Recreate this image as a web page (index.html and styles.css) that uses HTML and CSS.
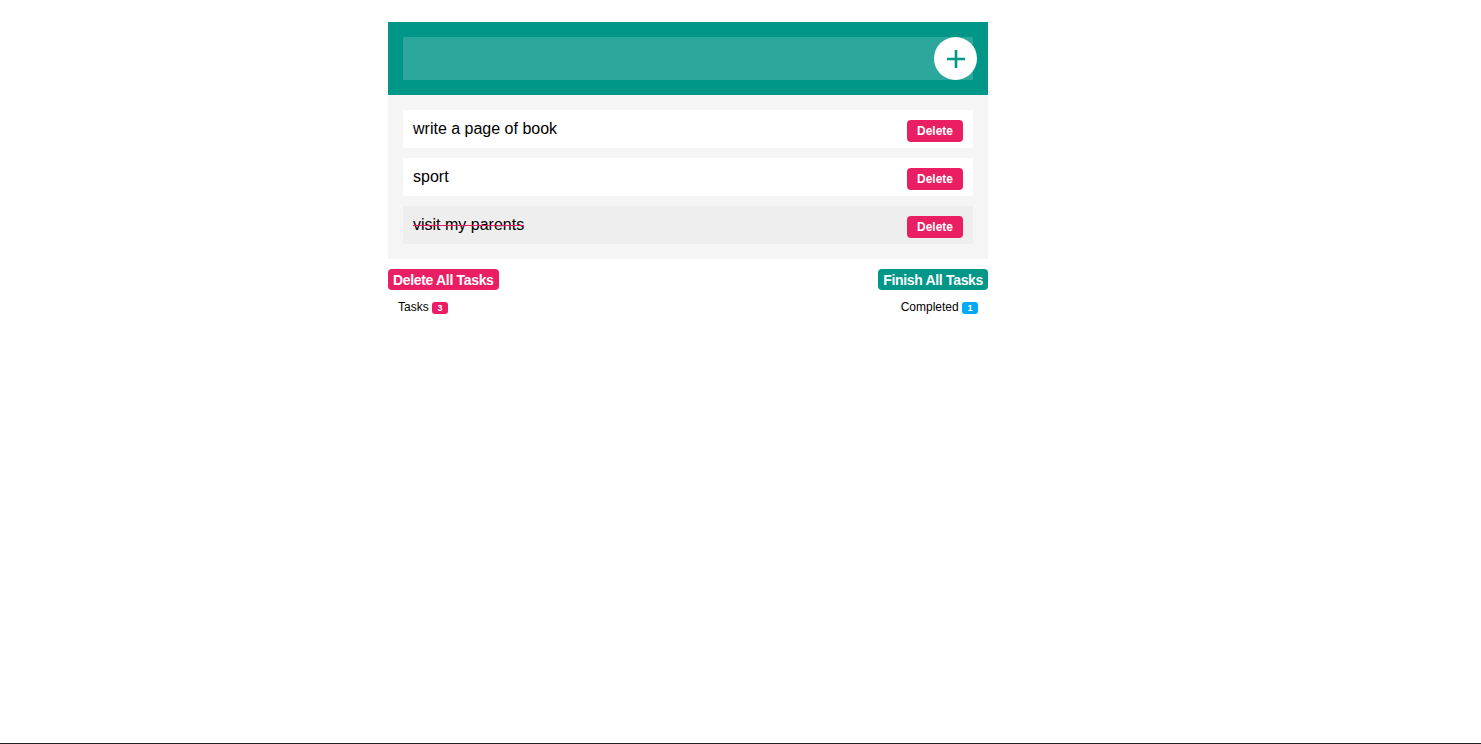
FILE: index.html
```html
<!DOCTYPE html>
<html lang="en">
<head>
<meta charset="utf-8">
<title>Todo</title>
<link rel="stylesheet" href="styles.css">
</head>
<body>
<div class="app">
  <header class="head">
    <input class="new-task" type="text" aria-label="New task">
    <button class="add" aria-label="Add">
      <svg width="20" height="20" viewBox="0 0 20 20"><path d="M10 1v18M1 10h18" stroke="#009688" stroke-width="2.6" fill="none"/></svg>
    </button>
  </header>
  <ul class="list">
    <li class="item"><span class="text">write a page of book</span><button class="del">Delete</button></li>
    <li class="item"><span class="text">sport</span><button class="del">Delete</button></li>
    <li class="item done"><span class="text">visit my parents</span><button class="del">Delete</button></li>
  </ul>
  <div class="actions">
    <button class="big red">Delete All Tasks</button>
    <button class="big teal">Finish All Tasks</button>
  </div>
  <div class="stats">
    <span>Tasks <span class="badge red">3</span></span>
    <span>Completed <span class="badge blue">1</span></span>
  </div>
</div>
<div class="bottom-line"></div>
</body>
</html>
```
FILE: styles.css
```css
* { box-sizing: border-box; }
body {
  margin: 0;
  font-family: "Liberation Sans", Arial, sans-serif;
  background: #fff;
  color: #000;
}
.app {
  width: 600px;
  margin: 22px 0 0 388px;
}
.head {
  background: #009688;
  padding: 15px 11px 15px 15px;
  display: flex;
  align-items: center;
}
.new-task {
  flex: 1;
  height: 43px;
  border: 0;
  margin: 0;
  background: rgba(255,255,255,0.17);
  outline: none;
}
.add {
  width: 43px;
  height: 43px;
  border-radius: 50%;
  border: 0;
  background: #fff;
  margin-left: -39px;
  padding: 0;
  display: flex;
  align-items: center;
  justify-content: center;
}
.list {
  list-style: none;
  margin: 0;
  padding: 15px;
  background: #f5f5f5;
  display: flex;
  flex-direction: column;
  gap: 10px;
}
.item {
  height: 38px;
  background: #fff;
  padding: 0 10px;
  display: flex;
  align-items: center;
  justify-content: space-between;
  font-size: 16px;
}
.item.done { background: #eee; }
.item.done .text {
  text-decoration: line-through;
  text-decoration-color: #e91e63;
}
.del {
  height: 22px;
  width: 56px;
  padding: 0;
  border: 0;
  border-radius: 4px;
  background: #e91e63;
  color: #fff;
  font: bold 12px "Liberation Sans", Arial, sans-serif;
  margin-top: 4px;
}
.actions {
  margin-top: 10px;
  display: flex;
  justify-content: space-between;
}
.big {
  height: 21px;
  padding: 0 5px;
  border: 0;
  border-radius: 4px;
  color: #fff;
  font: bold 14px "Liberation Sans", Arial, sans-serif;
  letter-spacing: -0.33px;
}
.big.red { background: #e91e63; }
.big.teal { background: #009688; }
.stats {
  margin-top: 9px;
  padding: 0 10px;
  display: flex;
  justify-content: space-between;
  font-size: 12px;
  line-height: 16px;
}
.badge {
  display: inline-block;
  min-width: 16px;
  height: 12px;
  line-height: 12px;
  padding: 0 4px;
  border-radius: 3px;
  color: #fff;
  font-size: 9px;
  font-weight: bold;
  text-align: center;
  vertical-align: 0;
}
.badge.red { background: #e91e63; }
.badge.blue { background: #03a9f4; }
.bottom-line {
  position: fixed;
  left: 0;
  right: 0;
  bottom: 0;
  height: 1px;
  background: #222;
}
```
